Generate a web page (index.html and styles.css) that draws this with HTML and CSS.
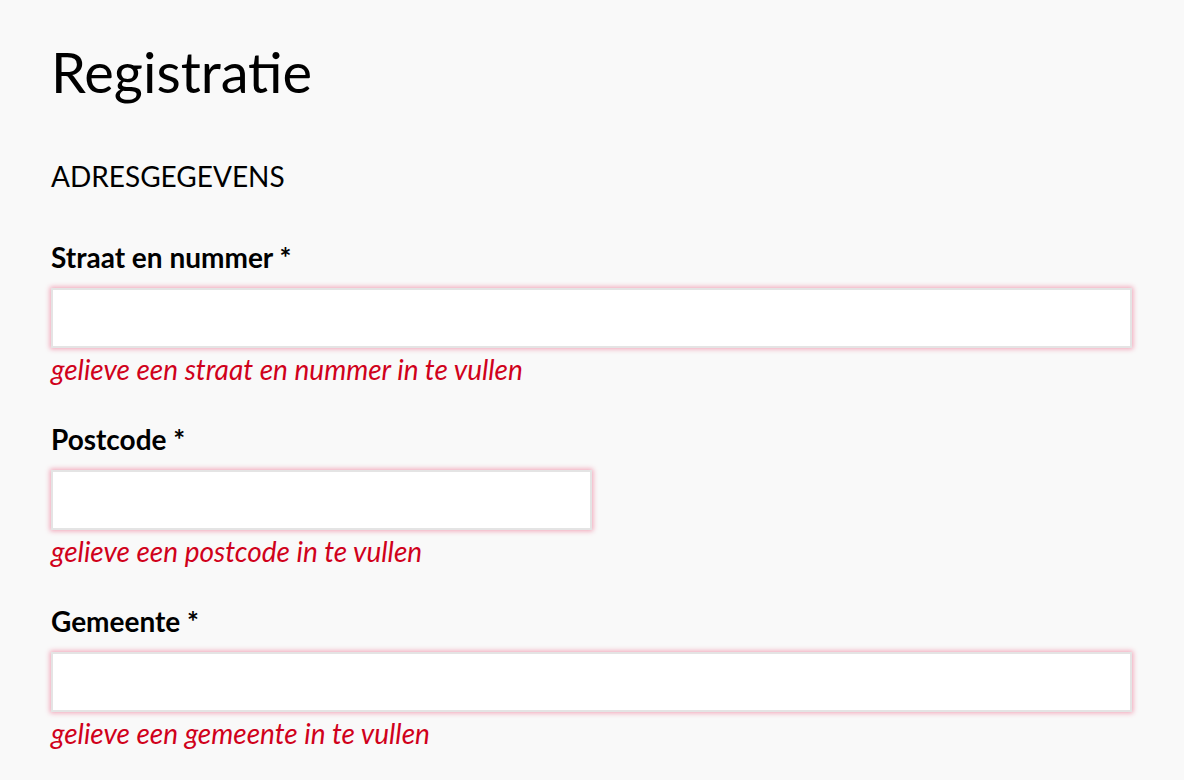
FILE: index.html
```html
<!DOCTYPE html>
<html lang="nl">
<head>
<meta charset="utf-8">
<title>Registratie</title>
<link rel="stylesheet" href="styles.css">
</head>
<body>
<main class="page">
  <h1 class="title">Registratie</h1>
  <h2 class="section">ADRESGEGEVENS</h2>
  <div class="field">
    <label class="label" for="straat">Straat en nummer *</label>
    <input class="input input-full" id="straat" type="text">
    <p class="error">gelieve een straat en nummer in te vullen</p>
  </div>
  <div class="field">
    <label class="label" for="postcode">Postcode *</label>
    <input class="input input-half" id="postcode" type="text">
    <p class="error">gelieve een postcode in te vullen</p>
  </div>
  <div class="field">
    <label class="label" for="gemeente">Gemeente *</label>
    <input class="input input-full" id="gemeente" type="text">
    <p class="error">gelieve een gemeente in te vullen</p>
  </div>
</main>
</body>
</html>
```

FILE: styles.css
```css
html, body {
  margin: 0;
  padding: 0;
  background: #f9f9f9;
}
body {
  font-family: Lato, "Liberation Sans", sans-serif;
  color: #000;
}
.page {
  padding: 38px 52px 0 51px;
  display: flex;
  flex-direction: column;
}
.title {
  margin: 0;
  font-size: 56px;
  font-weight: 400;
  line-height: 68px;
}
.section {
  margin: 53px 0 0;
  font-size: 28px;
  font-weight: 400;
  line-height: 34px;
}
.field {
  display: flex;
  flex-direction: column;
  margin-top: 47px;
}
.field + .field {
  margin-top: 36px;
}
.label {
  font-size: 28px;
  font-weight: 700;
  line-height: 34px;
  margin-bottom: 14px;
}
.input {
  box-sizing: border-box;
  height: 60px;
  margin: 0;
  border: 2px solid #e4e4e4;
  background: #fff;
  box-shadow: 0 0 5px 1px rgba(230, 30, 80, 0.4);
  outline: none;
  font: inherit;
}
.input-full {
  width: 100%;
}
.input-half {
  width: 541px;
}
.error {
  margin: 4px 0 0;
  font-size: 28px;
  font-style: italic;
  line-height: 34px;
  color: #d0011b;
}
```
